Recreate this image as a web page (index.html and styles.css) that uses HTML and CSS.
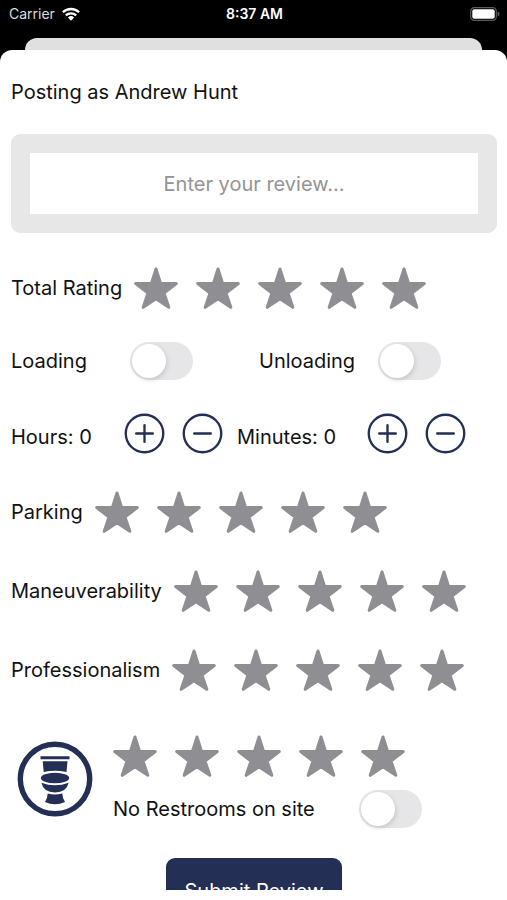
FILE: index.html
```html
<!DOCTYPE html>
<html lang="en">
<head>
<meta charset="utf-8">
<meta name="viewport" content="width=device-width, initial-scale=1">
<title>Post a Review</title>
<link rel="stylesheet" href="styles.css">
</head>
<body>
<svg class="defs" aria-hidden="true">
  <symbol id="star" viewBox="0 0 44 42">
    <path d="M22 2 26.6 16.5H42.3L30 26 34.8 40.3 22 31.8 9.2 40.3 14 26 1.7 16.5H17.4Z" fill="currentColor" stroke="currentColor" stroke-width="3" stroke-linejoin="round"/>
  </symbol>
  <symbol id="plus" viewBox="0 0 42 42">
    <g fill="none" stroke="currentColor" stroke-width="2.4" stroke-linecap="round"><circle cx="21" cy="21" r="19.2"/><path d="M12.5 21h17M21 12.5v17"/></g>
  </symbol>
  <symbol id="minus" viewBox="0 0 42 42">
    <g fill="none" stroke="currentColor" stroke-width="2.4" stroke-linecap="round"><circle cx="21" cy="21" r="19.2"/><path d="M12.5 21h17"/></g>
  </symbol>
</svg>
<div class="app">
  <header class="status">
    <div class="carrier">Carrier
      <svg class="wifi" viewBox="0 0 18 14" aria-hidden="true">
        <g fill="none" stroke="#fff" stroke-width="2.3"><path d="M.9 5.3a11.6 11.6 0 0 1 16.2 0"/><path d="M3.8 8.4a7.5 7.5 0 0 1 10.4 0"/></g>
        <path d="M5.9 10.5a4.5 4.5 0 0 1 6.2 0L9 13.7Z" fill="#fff"/>
      </svg>
    </div>
    <time>8:37 AM</time>
    <svg class="battery" viewBox="0 0 30 14" aria-hidden="true">
      <rect x=".7" y=".7" width="25.6" height="12.6" rx="3.6" fill="none" stroke="#5c5c5c" stroke-width="1.2"/>
      <rect x="2.3" y="2.3" width="22.4" height="9.4" rx="2" fill="#fff"/>
      <path d="M27.6 4.6q2 .7 2 2.4t-2 2.4Z" fill="#5c5c5c"/>
    </svg>
  </header>
  <div class="back-card"></div>
  <main class="sheet">
    <form class="form">
      <p class="author">Posting as Andrew Hunt</p>
      <div class="review"><input type="text" aria-label="Review" placeholder="Enter your review..."></div>

      <div class="row rating">
        <span id="total">Total Rating</span>
        <div class="stars" role="group" aria-labelledby="total">
          <button type="button" aria-label="1 star"><svg><use href="#star"/></svg></button>
          <button type="button" aria-label="2 stars"><svg><use href="#star"/></svg></button>
          <button type="button" aria-label="3 stars"><svg><use href="#star"/></svg></button>
          <button type="button" aria-label="4 stars"><svg><use href="#star"/></svg></button>
          <button type="button" aria-label="5 stars"><svg><use href="#star"/></svg></button>
        </div>
      </div>

      <div class="row toggles">
        <label for="loading">Loading</label>
        <input class="switch" type="checkbox" role="switch" id="loading">
        <label for="unloading">Unloading</label>
        <input class="switch" type="checkbox" role="switch" id="unloading">
      </div>

      <div class="row steppers">
        <span class="count">Hours: 0</span>
        <button type="button" aria-label="Add an hour"><svg><use href="#plus"/></svg></button>
        <button type="button" aria-label="Remove an hour"><svg><use href="#minus"/></svg></button>
        <span class="count">Minutes: 0</span>
        <button type="button" aria-label="Add a minute"><svg><use href="#plus"/></svg></button>
        <button type="button" aria-label="Remove a minute"><svg><use href="#minus"/></svg></button>
      </div>

      <div class="scores">
        <div class="row rating">
          <span id="parking">Parking</span>
          <div class="stars" role="group" aria-labelledby="parking">
            <button type="button" aria-label="1 star"><svg><use href="#star"/></svg></button>
            <button type="button" aria-label="2 stars"><svg><use href="#star"/></svg></button>
            <button type="button" aria-label="3 stars"><svg><use href="#star"/></svg></button>
            <button type="button" aria-label="4 stars"><svg><use href="#star"/></svg></button>
            <button type="button" aria-label="5 stars"><svg><use href="#star"/></svg></button>
          </div>
        </div>
        <div class="row rating">
          <span id="maneuver">Maneuverability</span>
          <div class="stars" role="group" aria-labelledby="maneuver">
            <button type="button" aria-label="1 star"><svg><use href="#star"/></svg></button>
            <button type="button" aria-label="2 stars"><svg><use href="#star"/></svg></button>
            <button type="button" aria-label="3 stars"><svg><use href="#star"/></svg></button>
            <button type="button" aria-label="4 stars"><svg><use href="#star"/></svg></button>
            <button type="button" aria-label="5 stars"><svg><use href="#star"/></svg></button>
          </div>
        </div>
        <div class="row rating">
          <span id="prof">Professionalism</span>
          <div class="stars" role="group" aria-labelledby="prof">
            <button type="button" aria-label="1 star"><svg><use href="#star"/></svg></button>
            <button type="button" aria-label="2 stars"><svg><use href="#star"/></svg></button>
            <button type="button" aria-label="3 stars"><svg><use href="#star"/></svg></button>
            <button type="button" aria-label="4 stars"><svg><use href="#star"/></svg></button>
            <button type="button" aria-label="5 stars"><svg><use href="#star"/></svg></button>
          </div>
        </div>
      </div>

      <div class="restroom">
        <svg class="toilet" viewBox="0 0 76 76" role="img" aria-label="Restroom">
          <circle cx="38" cy="38" r="34.7" fill="none" stroke="currentColor" stroke-width="5.4"/>
          <g fill="currentColor">
            <path d="M23.5 15.2h29v3h-29ZM25.7 20.2h24.8l-1 10.8Q38 28.3 26.7 31Z"/>
            <ellipse cx="38" cy="37" rx="14.2" ry="5.3"/>
            <path d="M24.4 41.7Q38 47 51.6 41.7 49.5 51.3 38 51.5 26.5 51.3 24.4 41.7Z"/>
            <path d="M30.7 52.5Q38 54.5 45.3 52.5 45.3 56.5 48 61 43 63.2 38 63.2T28 61Q30.7 56.5 30.7 52.5Z"/>
          </g>
        </svg>
        <div class="restroom-fields">
          <div class="stars" role="group" aria-label="Restrooms">
            <button type="button" aria-label="1 star"><svg><use href="#star"/></svg></button>
            <button type="button" aria-label="2 stars"><svg><use href="#star"/></svg></button>
            <button type="button" aria-label="3 stars"><svg><use href="#star"/></svg></button>
            <button type="button" aria-label="4 stars"><svg><use href="#star"/></svg></button>
            <button type="button" aria-label="5 stars"><svg><use href="#star"/></svg></button>
          </div>
          <div class="row none">
            <label for="none">No Restrooms on site</label>
            <input class="switch" type="checkbox" role="switch" id="none">
          </div>
        </div>
      </div>

      <button class="submit" type="submit">Submit Review</button>
    </form>
  </main>
</div>
</body>
</html>
```
FILE: styles.css
```css
* { box-sizing: border-box; }

body {
  display: flex;
  flex-direction: column;
  height: 100vh;
  margin: 0;
  padding-bottom: 10px;
  background: #fff;
  color: #111;
  font: 20px/24px Inter, "Liberation Sans", sans-serif;
}

button, input { font: inherit; margin: 0; }
button { padding: 0; border: 0; background: none; color: inherit; }
svg { display: block; }
.defs { position: absolute; width: 0; height: 0; }

.app {
  flex: 1;
  min-height: 0;
  display: flex;
  flex-direction: column;
  background: #000;
}

.status {
  display: grid;
  grid-template-columns: 1fr auto 1fr;
  align-items: center;
  height: 28px;
  margin-bottom: 10px;
  padding: 0 7px 0 9px;
  color: #fff;
  font-size: 14px;
  line-height: 20px;
}
.status time { font-weight: 600; }
.carrier { display: flex; align-items: center; gap: 7px; color: #ddd; }
.wifi { width: 18px; height: 14px; }
.battery { width: 30px; height: 14px; justify-self: end; }

.back-card {
  flex: none;
  height: 24px;
  margin: 0 25px -12px;
  border-radius: 12px 12px 0 0;
  background: #e0e0e0;
}

.sheet {
  position: relative;
  flex: 1;
  min-height: 0;
  overflow: hidden;
  padding: 30px 10px 0 11px;
  border-radius: 12px 12px 0 0;
  background: #fff;
}

.form { display: flex; flex-direction: column; }
.author { margin: 0 0 30px; }

.review {
  margin-bottom: 34px;
  padding: 19px;
  border-radius: 9px;
  background: #e7e7e7;
}
.review input {
  display: block;
  width: 100%;
  height: 61px;
  padding: 0 10px;
  border: 0;
  background: #fff;
  text-align: center;
}
.review input::placeholder { color: #949496; opacity: 1; }

.row { display: flex; align-items: center; }
.rating { gap: 12px; }

.stars { display: flex; gap: 18px; color: #8e8e93; }
.stars svg { width: 44px; height: 42px; }

.toggles {
  display: grid;
  grid-template-columns: 119px 129px 119px auto;
  justify-content: start;
  margin: 33px 0;
}

.switch {
  appearance: none;
  display: block;
  width: 63px;
  height: 38px;
  padding: 2px;
  border-radius: 19px;
  background: #e6e6e8;
}
.switch::before {
  content: "";
  display: block;
  width: 34px;
  height: 34px;
  border-radius: 50%;
  background: #fff;
  box-shadow: 1px 2px 5px rgb(0 0 0 / 14%);
}
.switch:checked { background: #34c759; }
.switch:checked::before { margin-left: auto; }

.steppers {
  display: grid;
  grid-template-columns: 113px 58px 55px 130px 58px auto;
  justify-content: start;
  color: #232f55;
}
.steppers svg { width: 41px; height: 41px; }
.count { padding-top: 6px; color: #111; }

.scores {
  display: flex;
  flex-direction: column;
  gap: 37px;
  margin: 37px 0 44px;
}

.restroom { display: flex; align-items: flex-start; gap: 20px; padding-left: 6px; }
.toilet { width: 76px; height: 76px; margin-top: 6px; color: #232f55; }
.restroom-fields { display: flex; flex-direction: column; gap: 13px; }
.none { justify-content: space-between; width: 309px; }

.submit {
  align-self: center;
  height: 66px;
  margin-top: 30px;
  padding: 0 18px;
  border-radius: 9px;
  background: #232f55;
  color: #fff;
}
```
